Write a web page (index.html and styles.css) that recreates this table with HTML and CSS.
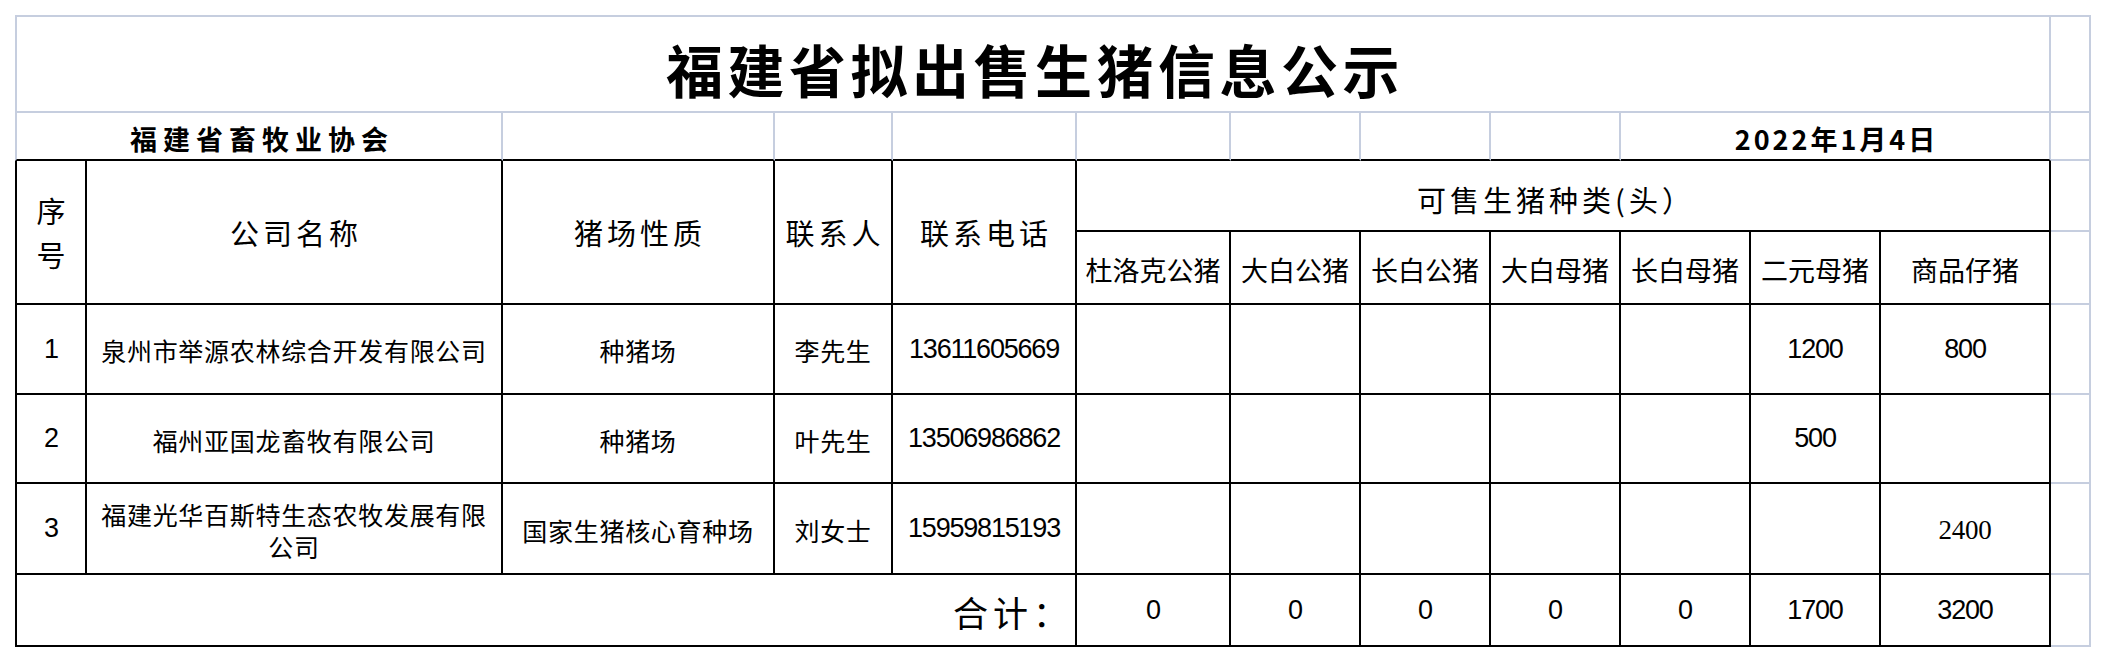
FILE: index.html
```html
<!DOCTYPE html>
<html lang="zh-CN">
<head>
<meta charset="utf-8">
<title>福建省拟出售生猪信息公示</title>
<link rel="stylesheet" href="styles.css">
</head>
<body>
<div class="sheet">
  <!-- row 1 -->
  <div class="cell span-title first top title"><span>福建省拟出售生猪信息公示</span></div>
  <div class="cell top"></div>

  <!-- row 2 -->
  <div class="cell span-org first bb org"><span>福建省畜牧业协会</span></div>
  <div class="cell bb"></div>
  <div class="cell bb"></div>
  <div class="cell bb"></div>
  <div class="cell bb"></div>
  <div class="cell bb"></div>
  <div class="cell bb"></div>
  <div class="cell bb"></div>
  <div class="cell span-date bb date"><span>2022年1月4日</span></div>
  <div class="cell"></div>

  <!-- header rows -->
  <div class="cell t first rs2 hd seq"><span>序<br>号</span></div>
  <div class="cell t rs2 hd"><span>公司名称</span></div>
  <div class="cell t rs2 hd"><span>猪场性质</span></div>
  <div class="cell t rs2 hd"><span>联系人</span></div>
  <div class="cell t rs2 hd"><span>联系电话</span></div>
  <div class="cell t span-kinds hd kinds"><span>可售生猪种类(头）</span></div>
  <div class="cell"></div>
  <div class="cell t sub"><span>杜洛克公猪</span></div>
  <div class="cell t sub"><span>大白公猪</span></div>
  <div class="cell t sub"><span>长白公猪</span></div>
  <div class="cell t sub"><span>大白母猪</span></div>
  <div class="cell t sub"><span>长白母猪</span></div>
  <div class="cell t sub"><span>二元母猪</span></div>
  <div class="cell t sub"><span>商品仔猪</span></div>
  <div class="cell"></div>

  <!-- data row 1 -->
  <div class="cell t first num"><span>1</span></div>
  <div class="cell t txt"><span>泉州市举源农林综合开发有限公司</span></div>
  <div class="cell t txt"><span>种猪场</span></div>
  <div class="cell t txt"><span>李先生</span></div>
  <div class="cell t num"><span>13611605669</span></div>
  <div class="cell t"></div>
  <div class="cell t"></div>
  <div class="cell t"></div>
  <div class="cell t"></div>
  <div class="cell t"></div>
  <div class="cell t num"><span>1200</span></div>
  <div class="cell t num"><span>800</span></div>
  <div class="cell"></div>

  <!-- data row 2 -->
  <div class="cell t first num"><span>2</span></div>
  <div class="cell t txt"><span>福州亚国龙畜牧有限公司</span></div>
  <div class="cell t txt"><span>种猪场</span></div>
  <div class="cell t txt"><span>叶先生</span></div>
  <div class="cell t num"><span>13506986862</span></div>
  <div class="cell t"></div>
  <div class="cell t"></div>
  <div class="cell t"></div>
  <div class="cell t"></div>
  <div class="cell t"></div>
  <div class="cell t num"><span>500</span></div>
  <div class="cell t"></div>
  <div class="cell"></div>

  <!-- data row 3 -->
  <div class="cell t first num"><span>3</span></div>
  <div class="cell t txt wrap"><span>福建光华百斯特生态农牧发展有限公司</span></div>
  <div class="cell t txt"><span>国家生猪核心育种场</span></div>
  <div class="cell t txt"><span>刘女士</span></div>
  <div class="cell t num"><span>15959815193</span></div>
  <div class="cell t"></div>
  <div class="cell t"></div>
  <div class="cell t"></div>
  <div class="cell t"></div>
  <div class="cell t"></div>
  <div class="cell t"></div>
  <div class="cell t serifnum"><span>2400</span></div>
  <div class="cell"></div>

  <!-- total row -->
  <div class="cell t first span-total total"><span>合计：</span></div>
  <div class="cell t num"><span>0</span></div>
  <div class="cell t num"><span>0</span></div>
  <div class="cell t num"><span>0</span></div>
  <div class="cell t num"><span>0</span></div>
  <div class="cell t num"><span>0</span></div>
  <div class="cell t num"><span>1700</span></div>
  <div class="cell t num"><span>3200</span></div>
  <div class="cell"></div>
</div>
</body>
</html>
```

FILE: styles.css
```css
:root {
  --grid: #c6cedf;
  --ink: #000000;
  --cjk: "Noto Sans CJK SC", "Noto Sans", sans-serif;
}

* {
  box-sizing: border-box;
}

html,
body {
  margin: 0;
  padding: 0;
  background: #ffffff;
  color: var(--ink);
  font-family: var(--cjk);
}

.sheet {
  margin: 15px 0 0 15px;
  display: grid;
  grid-template-columns: 72px 416px 272px 118px 184px 154px 130px 130px 130px 130px 130px 170px 40px;
  grid-template-rows: 98px 48px 71px 73px 90px 89px 91px 72px;
  width: max-content;
}

.cell {
  display: flex;
  align-items: center;
  justify-content: center;
  text-align: center;
  border-right: 2px solid var(--grid);
  border-bottom: 2px solid var(--grid);
  min-width: 0;
  overflow: hidden;
  white-space: nowrap;
}

.first {
  border-left: 2px solid var(--grid);
}

.top {
  border-top: 2px solid var(--grid);
}

.bb {
  border-bottom-color: var(--ink);
}

.t {
  border-right-color: var(--ink);
  border-bottom-color: var(--ink);
}

.t.first {
  border-left-color: var(--ink);
}

/* spans */
.span-title {
  grid-column: 1 / 13;
}

.span-org {
  grid-column: 1 / 3;
}

.span-date {
  grid-column: 10 / 13;
}

.rs2 {
  grid-row: span 2;
}

.span-kinds {
  grid-column: 6 / 13;
}

.span-total {
  grid-column: 1 / 6;
}

/* text styles */
.title {
  font-size: 57px;
  font-weight: 700;
  letter-spacing: 4.5px;
  padding-top: 8px;
  padding-left: 4px;
}

.org {
  font-size: 27px;
  font-weight: 700;
  letter-spacing: 6px;
  padding-top: 5px;
  padding-left: 6px;
}

.date {
  font-size: 27px;
  font-weight: 700;
  letter-spacing: 3px;
  padding-top: 5px;
  padding-left: 3px;
}

.hd {
  font-size: 29px;
  letter-spacing: 4px;
  padding-left: 4px;
}

.seq {
  line-height: 44px;
  white-space: normal;
  padding-left: 0;
  letter-spacing: 0;
}

.kinds {
  font-size: 29px;
  letter-spacing: 4px;
  padding-left: 0;
  padding-right: 14px;
  padding-top: 6px;
}

.sub {
  font-size: 27px;
  letter-spacing: 0;
  padding-top: 4px;
}

.txt {
  font-size: 25px;
  letter-spacing: 0.7px;
  padding-top: 2px;
}

.wrap {
  white-space: normal;
  line-height: 32px;
  padding: 2px 10px 0;
}

.num {
  font-family: "Liberation Sans", Arial, sans-serif;
  font-size: 27px;
  letter-spacing: -1.2px;
}

.serifnum {
  font-family: "Liberation Serif", "Times New Roman", serif;
  font-size: 27px;
  letter-spacing: -0.3px;
  padding-top: 4px;
}

.total {
  justify-content: flex-end;
  font-size: 35px;
  letter-spacing: 5px;
  padding-right: 2px;
  padding-top: 2px;
}
```
